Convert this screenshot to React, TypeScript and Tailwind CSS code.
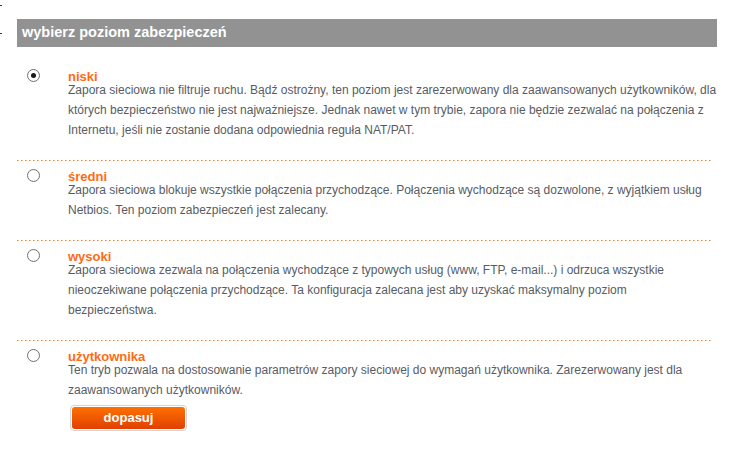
import React from 'react';

type Level = {
  id: string;
  title: string;
  body: string;
  checked?: boolean;
  action?: string;
};

const levels: Level[] = [
  {
    id: 'low',
    title: 'niski',
    body:
      'Zapora sieciowa nie filtruje ruchu. Bądź ostrożny, ten poziom jest zarezerwowany dla zaawansowanych użytkowników, dla których bezpieczeństwo nie jest najważniejsze. Jednak nawet w tym trybie, zapora nie będzie zezwalać na połączenia z Internetu, jeśli nie zostanie dodana odpowiednia reguła NAT/PAT.',
    checked: true,
  },
  {
    id: 'medium',
    title: 'średni',
    body:
      'Zapora sieciowa blokuje wszystkie połączenia przychodzące. Połączenia wychodzące są dozwolone, z wyjątkiem usług Netbios. Ten poziom zabezpieczeń jest zalecany.',
  },
  {
    id: 'high',
    title: 'wysoki',
    body:
      'Zapora sieciowa zezwala na połączenia wychodzące z typowych usług (www, FTP, e-mail...) i odrzuca wszystkie nieoczekiwane połączenia przychodzące. Ta konfiguracja zalecana jest aby uzyskać maksymalny poziom bezpieczeństwa.',
  },
  {
    id: 'custom',
    title: 'użytkownika',
    body:
      'Ten tryb pozwala na dostosowanie parametrów zapory sieciowej do wymagań użytkownika. Zarezerwowany jest dla zaawansowanych użytkowników.',
    action: 'dopasuj',
  },
];

const Radio = ({ checked }: { checked?: boolean }) => (
  <div className="w-[13px] h-[13px] shrink-0 rounded-full border-[1.5px] border-[#6f6f6f] bg-white flex items-center justify-center">
    {checked && <div className="w-[5px] h-[5px] rounded-full bg-[#1a1a1a]" />}
  </div>
);

// dotted orange rule, one dot every 4px
const Separator = () => (
  <svg width="696" height="1" className="block" shapeRendering="crispEdges">
    <rect x="0" y="0" width="696" height="1" fill="url(#dots)" />
    <defs>
      <pattern id="dots" x="0" y="0" width="4" height="1" patternUnits="userSpaceOnUse">
        <rect x="0" y="0" width="1" height="1" fill="#ff7420" />
        <rect x="1" y="0" width="1" height="1" fill="#ffc49a" />
      </pattern>
    </defs>
  </svg>
);

export default function App() {
  return (
    <div className="relative w-[729px] h-[452px] bg-white font-['Liberation_Sans',Arial,sans-serif]">
      {/* frame marks on the left edge */}
      <div className="absolute left-0 top-[5px] w-[2px] h-px bg-[#7a1e1e]" />
      <div className="absolute left-0 top-[33px] w-[2px] h-px bg-[#7a1e1e]" />

      <div className="pt-[19px] pl-[17px] w-[717px]">
        <div className="h-[28px] bg-[#929292] flex items-center pl-[5px] text-white font-bold text-[14.5px]">
          wybierz poziom zabezpieczeń
        </div>

        <div className="pt-[14px]">
          {levels.map((lvl, i) => (
            <div key={lvl.id}>
              <div className="flex pt-[8px] pb-[20px]">
                <div className="ml-[10px] w-[41px] shrink-0">
                  <Radio checked={lvl.checked} />
                </div>
                <div className="w-[650px]">
                  <div className="pt-px text-[13px] leading-[14px] font-bold text-[#ff6a14]">{lvl.title}</div>
                  <p className="-mt-[4px] text-[12px] leading-[20px] text-[#575c63]">{lvl.body}</p>
                  {lvl.action && (
                    <button className="mt-[5px] ml-[2px] w-[117px] h-[26px] rounded-[4px] border border-[#d4d4d4] p-px bg-white">
                      <span className="flex items-center justify-center w-full h-full rounded-[3px] bg-[linear-gradient(to_bottom,#ff7000,#e04000)] text-white font-bold text-[13px]">
                        {lvl.action}
                      </span>
                    </button>
                  )}
                </div>
              </div>
              {i < levels.length - 1 && <Separator />}
            </div>
          ))}
        </div>
      </div>
    </div>
  );
}
